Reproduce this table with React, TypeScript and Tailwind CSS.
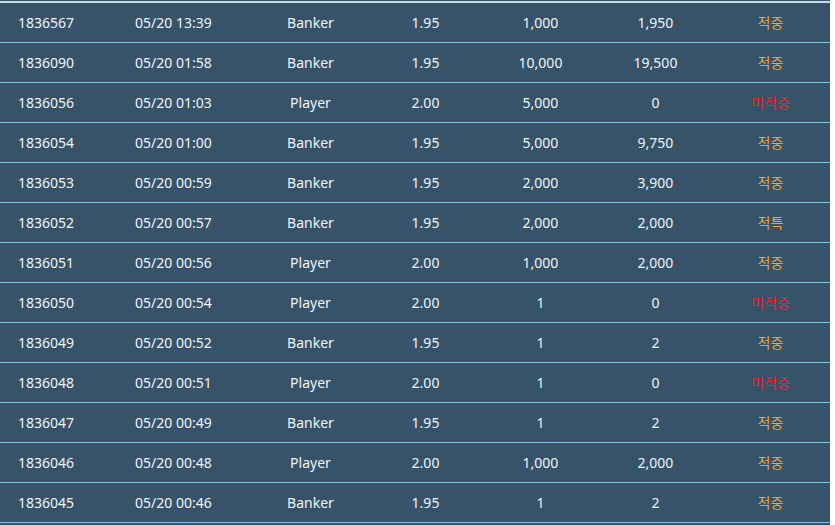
import React from "react";

type Row = [string, string, string, string, string, string, string];
const rows: Row[] = [
  ["1836567", "05/20 13:39", "Banker", "1.95", "1,000", "1,950", "적중"],
  ["1836090", "05/20 01:58", "Banker", "1.95", "10,000", "19,500", "적중"],
  ["1836056", "05/20 01:03", "Player", "2.00", "5,000", "0", "미적중"],
  ["1836054", "05/20 01:00", "Banker", "1.95", "5,000", "9,750", "적중"],
  ["1836053", "05/20 00:59", "Banker", "1.95", "2,000", "3,900", "적중"],
  ["1836052", "05/20 00:57", "Banker", "1.95", "2,000", "2,000", "적특"],
  ["1836051", "05/20 00:56", "Player", "2.00", "1,000", "2,000", "적중"],
  ["1836050", "05/20 00:54", "Player", "2.00", "1", "0", "미적중"],
  ["1836049", "05/20 00:52", "Banker", "1.95", "1", "2", "적중"],
  ["1836048", "05/20 00:51", "Player", "2.00", "1", "0", "미적중"],
  ["1836047", "05/20 00:49", "Banker", "1.95", "1", "2", "적중"],
  ["1836046", "05/20 00:48", "Player", "2.00", "1,000", "2,000", "적중"],
  ["1836045", "05/20 00:46", "Banker", "1.95", "1", "2", "적중"],
];

export default function App() {
  return (
    <div
      className="w-[835px] h-[525px] bg-white overflow-hidden"
      style={{ fontFamily: '"Noto Sans", "Noto Sans CJK KR", sans-serif' }}
    >
      <div className="w-[830px] h-[525px] bg-[#36536a] text-[#eef3f6] text-[14px] leading-none">
        <div className="h-[1px] bg-[#36536a]" />
        <div className="h-[2px] bg-[#c9dde8]" />
        {rows.map((r, i) => (
          <div
            key={i}
            className="flex h-[40px] items-center border-b border-[#86c1de]"
          >
            <div className="w-[117px] pl-[18px]">{r[0]}</div>
            <div className="w-[136px] pl-[18px]">{r[1]}</div>
            <div className="w-[115px] text-center">{r[2]}</div>
            <div className="w-[115px] text-center">{r[3]}</div>
            <div className="w-[115px] text-center">{r[4]}</div>
            <div className="w-[115px] text-center">{r[5]}</div>
            <div
              className={
                "w-[115px] text-center " +
                (r[6] === "미적중" ? "text-[#ff1a1a]" : "text-[#f5a623]")
              }
            >
              {r[6]}
            </div>
          </div>
        ))}
      </div>
    </div>
  );
}
